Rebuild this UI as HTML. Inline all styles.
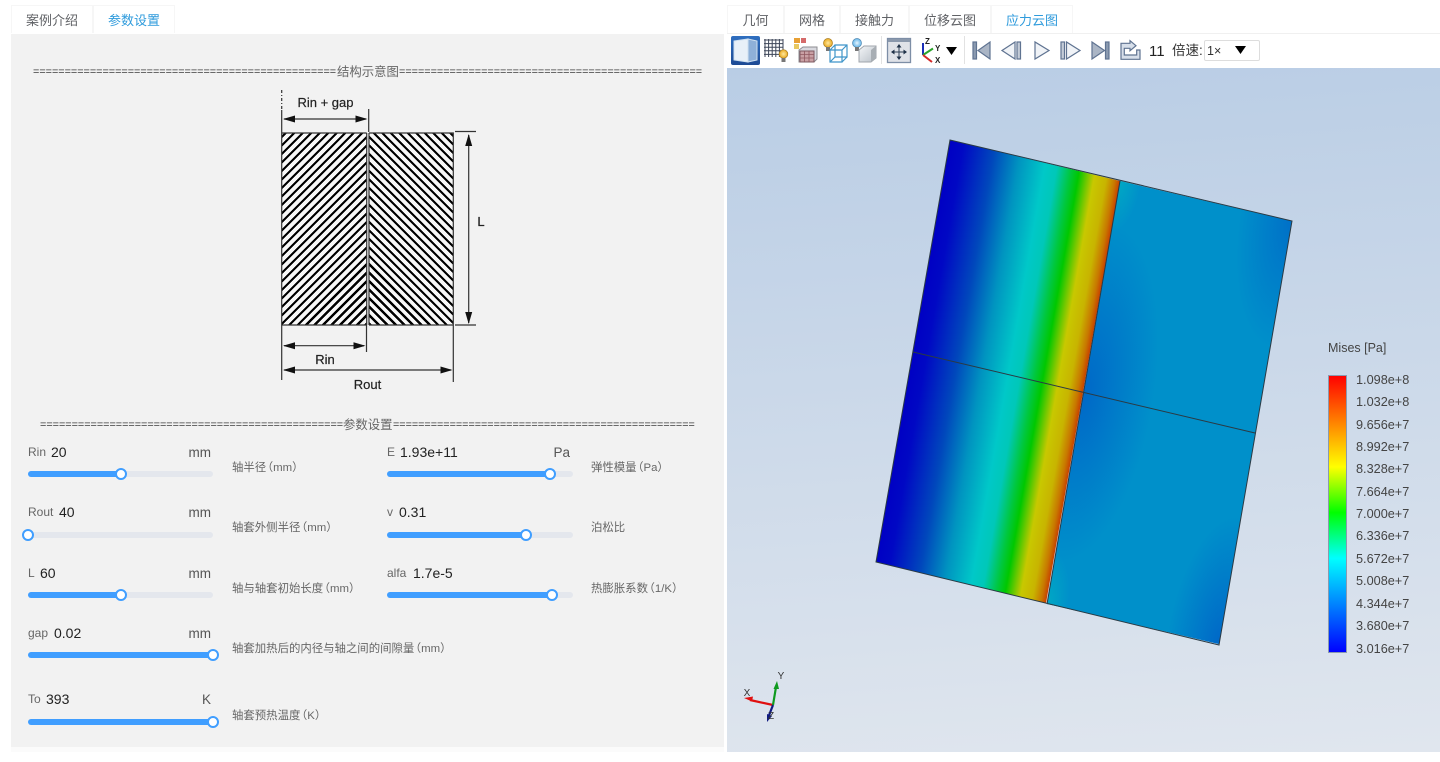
<!DOCTYPE html>
<html><head><meta charset="utf-8">
<style>
html,body{margin:0;padding:0;background:#fff;width:1440px;height:762px;overflow:hidden}
body{position:relative;font-family:"Liberation Sans","Noto Sans CJK SC",sans-serif;color:#606266}
.a{position:absolute;white-space:nowrap;line-height:1}
.tab{position:absolute;top:5px;height:28px;border:1px solid #f6f6f6;border-bottom:0;box-sizing:border-box;font-size:13px;line-height:29px;text-align:center;color:#606266;background:#fff}
.on{color:#2f9bdc}
.eq{font-size:10.82px;color:#3c3c3c}
.ttl{font-size:12.4px;color:#666}
.tr{position:absolute;height:6px;border-radius:3px;background:#e4e7ed}
.fl{position:absolute;height:6px;border-radius:3px;background:#409eff}
.th{position:absolute;width:12px;height:12px;box-sizing:border-box;border-radius:50%;background:#fff;border:2px solid #409eff}
.lb{font-size:12px;color:#666}
.val{font-size:14px;color:#222}
.un{font-size:13.5px;color:#555}
.ds{font-size:11.4px;color:#666;top:0}
.ds i{font-style:normal;margin-left:-4.5px}
.lg{font-size:12.7px;color:#444;left:1356px}
</style></head><body>

<div class="a" style="left:11px;top:34px;width:713px;height:713px;background:#f2f2f2"></div>
<div class="a" style="left:11px;top:747px;width:713px;height:5px;background:#fbfbfb"></div>

<div class="tab" style="left:11px;width:82px">案例介绍</div>
<div class="tab on" style="left:93px;width:82px;color:#2f9bdc">参数设置</div>

<div class="a eq" style="left:33px;top:67px">================================================</div>
<div class="a ttl" style="left:337px;top:66px">结构示意图</div>
<div class="a eq" style="left:399px;top:67px">================================================</div>

<div class="a" style="left:282px;top:133px;width:85px;height:192px;background:repeating-linear-gradient(-45deg,#000 0 2.2px,#f8f8f8 2.2px 6px)"></div>
<div class="a" style="left:369px;top:133px;width:84px;height:192px;background:repeating-linear-gradient(45deg,#000 0 2.2px,#f8f8f8 2.2px 6px)"></div>
<svg class="a" style="left:250px;top:80px" width="260" height="320" viewBox="250 80 260 320">
<g fill="none" stroke="#333" stroke-width="1.2">
<path d="M281.700 90V110" stroke-dasharray="3 2 1 2"/>
<path d="M281.700 110V380M282 133H366.700M282 325H366.500V352M369 133H453.300V382M369 325H453M369 133V325M366.700 133V325M368.700 109V132M455 131.500H476M455 325H476"/>
<path d="M284 119H366M284 345.700H364M284 370H451M468.700 135V323"/>
</g>
<g fill="#111">
<path d="M283 119l12-3.500v7zM367.500 119l-12-3.500v7zM283 345.700l12-3.500v7zM365.500 345.700l-12-3.500v7zM283 370l12-3.500v7zM452.500 370l-12-3.500v7zM468.700 134l-3.500 12h7zM468.700 324l-3.500-12h7z"/>
</g>
<g font-family="Liberation Sans,sans-serif" font-size="13" fill="#222" stroke="#222" stroke-width=".2" text-anchor="middle">
<text x="325.500" y="107">Rin + gap</text>
<text x="325" y="364">Rin</text>
<text x="367.500" y="389">Rout</text>
<text x="481" y="226">L</text>
</g>
</svg>

<div class="a eq" style="left:40px;top:420px">================================================</div>
<div class="a ttl" style="left:343px;top:419px">参数设置</div>
<div class="a eq" style="left:393px;top:420px;font-size:10.78px">================================================</div>

<!-- sliders left -->
<div class="a lb" style="left:28px;top:446px">Rin</div><div class="a val" style="left:51px;top:445px">20</div><div class="a un" style="right:1229px;top:446px">mm</div>
<div class="tr" style="left:28px;top:471px;width:185px"></div><div class="fl" style="left:28px;top:471px;width:93px"></div><div class="th" style="left:115px;top:468px"></div>
<div class="a ds" style="left:232px;top:463px">轴半径<i>（</i>mm）</div>

<div class="a lb" style="left:28px;top:506px">Rout</div><div class="a val" style="left:59px;top:505px">40</div><div class="a un" style="right:1229px;top:506px">mm</div>
<div class="tr" style="left:28px;top:532px;width:185px"></div><div class="th" style="left:22px;top:529px"></div>
<div class="a ds" style="left:232px;top:523px">轴套外侧半径<i>（</i>mm）</div>

<div class="a lb" style="left:28px;top:567px">L</div><div class="a val" style="left:40px;top:566px">60</div><div class="a un" style="right:1229px;top:567px">mm</div>
<div class="tr" style="left:28px;top:592px;width:185px"></div><div class="fl" style="left:28px;top:592px;width:93px"></div><div class="th" style="left:115px;top:589px"></div>
<div class="a ds" style="left:232px;top:584px">轴与轴套初始长度<i>（</i>mm）</div>

<div class="a lb" style="left:28px;top:627px">gap</div><div class="a val" style="left:54px;top:626px">0.02</div><div class="a un" style="right:1229px;top:627px">mm</div>
<div class="fl" style="left:28px;top:652px;width:185px"></div><div class="th" style="left:207px;top:649px"></div>
<div class="a ds" style="left:232px;top:644px">轴套加热后的内径与轴之间的间隙量<i>（</i>mm）</div>

<div class="a lb" style="left:28px;top:693px">To</div><div class="a val" style="left:46px;top:692px">393</div><div class="a un" style="right:1229px;top:693px">K</div>
<div class="fl" style="left:28px;top:719px;width:185px"></div><div class="th" style="left:207px;top:716px"></div>
<div class="a ds" style="left:232px;top:711px">轴套预热温度<i>（</i>K）</div>

<!-- sliders right -->
<div class="a lb" style="left:387px;top:446px">E</div><div class="a val" style="left:400px;top:445px">1.93e+11</div><div class="a un" style="right:870px;top:446px">Pa</div>
<div class="tr" style="left:387px;top:471px;width:186px"></div><div class="fl" style="left:387px;top:471px;width:163px"></div><div class="th" style="left:544px;top:468px"></div>
<div class="a ds" style="left:591px;top:463px">弹性模量<i>（</i>Pa）</div>

<div class="a lb" style="left:387px;top:506px">v</div><div class="a val" style="left:399px;top:505px">0.31</div>
<div class="tr" style="left:387px;top:532px;width:186px"></div><div class="fl" style="left:387px;top:532px;width:139px"></div><div class="th" style="left:520px;top:529px"></div>
<div class="a ds" style="left:591px;top:523px">泊松比</div>

<div class="a lb" style="left:387px;top:567px">alfa</div><div class="a val" style="left:413px;top:566px">1.7e-5</div>
<div class="tr" style="left:387px;top:592px;width:186px"></div><div class="fl" style="left:387px;top:592px;width:165px"></div><div class="th" style="left:546px;top:589px"></div>
<div class="a ds" style="left:591px;top:584px">热膨胀系数<i>（</i>1/K）</div>

<!-- right tabs -->
<div class="tab" style="left:727px;width:57px">几何</div>
<div class="tab" style="left:784px;width:56px">网格</div>
<div class="tab" style="left:840px;width:69px">接触力</div>
<div class="tab" style="left:909px;width:82px">位移云图</div>
<div class="tab on" style="left:991px;width:82px;color:#2f9bdc">应力云图</div>
<div class="a" style="left:727px;top:33px;width:713px;height:1px;background:#f0f0f0"></div>

<!-- toolbar -->
<svg class="a" style="left:727px;top:34px" width="713" height="34" viewBox="727 34 713 34">
<defs>
<linearGradient id="sel" x1="0" y1="0" x2="0" y2="1"><stop offset="0" stop-color="#2f6fc0"/><stop offset="1" stop-color="#1d4a94"/></linearGradient>
<linearGradient id="cb" x1="0" y1="0" x2="1" y2="1"><stop offset="0" stop-color="#f4f6f8"/><stop offset="1" stop-color="#b9c0c8"/></linearGradient>
<radialGradient id="bulb"><stop offset="0" stop-color="#ffe9a0"/><stop offset="1" stop-color="#e9a81e"/></radialGradient>
<radialGradient id="bulb2"><stop offset="0" stop-color="#e8f6ff"/><stop offset="1" stop-color="#62b4e8"/></radialGradient>
</defs>
<!-- solid selected -->
<rect x="731" y="36" width="29" height="29" rx="2" fill="url(#sel)"/>
<path d="M734 41L748 39V62L734 60z" fill="#e8f0f8" stroke="#cfe0f0"/>
<path d="M748 39L757 41V60L748 62z" fill="#8eb0d8" stroke="#cfe0f0"/>
<!-- grid + bulb -->
<path d="M765 39V57M768.600 39V57M772.200 39V57M775.800 39V57M779.400 39V57M783 39V50M764 40H783M764 43.600H783M764 47.200H783M764 50.800H781M764 54.400H780" stroke="#3d4658" stroke-width="1" fill="none"/>
<circle cx="783.500" cy="54" r="4.300" fill="url(#bulb)" stroke="#a87c20" stroke-width=".7"/><rect x="781.500" y="58" width="4" height="4" fill="#777"/>
<!-- mesh cube -->
<rect x="794" y="38" width="6" height="5" fill="#e8a035"/><rect x="801" y="38" width="5" height="5" fill="#d56a6a"/><rect x="794" y="44" width="5" height="5" fill="#e8c860"/>
<path d="M799 50L803 47H817V59L814 62H799z" fill="#d8d8de" stroke="#8d8d92"/>
<path d="M800 51H814V62H800z" fill="#c9a0a4" stroke="#7d5860"/>
<path d="M804.500 51V62M809 51V62M800 54.500H814M800 58H814" stroke="#8f5860" stroke-width=".8"/>
<!-- wire cube -->
<circle cx="828" cy="43" r="4.500" fill="url(#bulb)" stroke="#a87c20" stroke-width=".7"/><rect x="826" y="47" width="4" height="4" fill="#777"/>
<path d="M830 50H842V62H830zM835 45H847V57H835zM830 50L835 45M842 50L847 45M842 62L847 57M830 62L835 57" fill="none" stroke="#3f95c9" stroke-width="1.200"/>
<!-- solid cube bulb -->
<circle cx="857" cy="43" r="4.500" fill="url(#bulb2)" stroke="#4f86b0" stroke-width=".7"/><rect x="855" y="47" width="4" height="4" fill="#777"/>
<path d="M859 50L864 46H876V58L871 62H859z" fill="url(#cb)" stroke="#a0a6ac"/><path d="M871 50L876 46V58L871 62z" fill="#a8aeb4"/>
<path d="M881.500 36V64" stroke="#e2e2e2"/>
<!-- fit -->
<rect x="887.500" y="38.500" width="23" height="24" fill="#dfe2e8" stroke="#7d8ea6" stroke-width="1.300"/><rect x="888" y="39" width="22" height="3" fill="#8a98ac"/>
<path d="M899 46v12M893 52h12" stroke="#2e3f55" stroke-width="1"/><path d="M899 44l-2.500 3.500h5zM899 60l-2.500-3.500h5zM891 52l3.500-2.500v5zM907 52l-3.500-2.500v5z" fill="#1f3148"/>
<!-- axes -->
<path d="M923 55V43" stroke="#1c2fb8" stroke-width="2"/><path d="M923 55L933 48.500" stroke="#2ca52c" stroke-width="2"/><path d="M923 55L932 62" stroke="#d42a2a" stroke-width="2"/>
<g font-family="Liberation Sans,sans-serif" font-size="8" font-weight="bold" fill="#222"><text x="925" y="44">Z</text><text x="935" y="51">Y</text><text x="935" y="63">X</text></g>
<path d="M946 47h11l-5.500 8z" fill="#000"/>
<path d="M964.500 36V64" stroke="#e2e2e2"/>
<!-- media -->
<g stroke="#5f7391" stroke-width="1.200">
<rect x="973" y="42" width="3.500" height="17" fill="#8b9ab0"/><path d="M990 42V59L978 50.500z" fill="#aab5c5"/>
<path d="M1015 42V59L1002 50.500z" fill="#f0f3f7"/><rect x="1017" y="42" width="3.500" height="17" fill="#c4ccd8"/>
<path d="M1035 42V59L1049 50.500z" fill="#f0f3f7"/>
<rect x="1061" y="42" width="3.500" height="17" fill="#c4ccd8"/><path d="M1066.500 42V59L1080 50.500z" fill="#f0f3f7"/>
<path d="M1092 42V59L1104.500 50.500z" fill="#aab5c5"/><rect x="1105.500" y="42" width="3.500" height="17" fill="#8b9ab0"/>
<path d="M1121 43.300H1130V40.700L1136 45.700 1130 50.700V48.300H1124.300V55H1136.700V50H1140V59.300H1121z" fill="#d7dfea"/>
</g>
</svg>
<div class="a" style="left:1149px;top:44px;font-size:15px;color:#222">11</div>
<div class="a" style="left:1172px;top:44px;font-size:13.500px;color:#333">倍速:</div>
<div class="a" style="left:1204px;top:40px;width:56px;height:21px;box-sizing:border-box;background:#fff;border:1px solid #ddd;border-radius:2px"></div>
<div class="a" style="left:1207px;top:45px;font-size:12.500px;color:#333">1×</div>
<svg class="a" style="left:1235px;top:46px" width="11" height="9"><path d="M0 0h11l-5.500 8z" fill="#000"/></svg>

<!-- viewport -->
<div class="a" style="left:727px;top:68px;width:713px;height:684px;background:linear-gradient(176deg,#b9cde5 0%,#e0e6ee 100%)"></div>

<svg class="a" style="left:727px;top:68px" width="713" height="684" viewBox="727 68 713 684">
<defs>
<linearGradient id="lf" gradientUnits="userSpaceOnUse" x1="0" y1="0" x2="1" y2="0">
<stop offset="0" stop-color="#0000c4"/><stop offset=".08" stop-color="#0008c4"/><stop offset=".26" stop-color="#0048bc"/><stop offset=".41" stop-color="#0094c0"/><stop offset=".56" stop-color="#00c8c8"/><stop offset=".63" stop-color="#00c8b8"/><stop offset=".71" stop-color="#00c840"/><stop offset=".76" stop-color="#00c800"/><stop offset=".81" stop-color="#70c800"/><stop offset=".85" stop-color="#c8c800"/><stop offset=".92" stop-color="#c8b400"/><stop offset=".97" stop-color="#c87800"/><stop offset="1" stop-color="#c84000"/>
</linearGradient>
<radialGradient id="c1" gradientUnits="userSpaceOnUse" cx="0" cy=".5" r=".4"><stop offset="0" stop-color="#0068c8"/><stop offset="1" stop-color="#0068c8" stop-opacity="0"/></radialGradient>
<radialGradient id="c2" gradientUnits="userSpaceOnUse" cx="1" cy="0" r=".3"><stop offset="0" stop-color="#0070c8"/><stop offset="1" stop-color="#0070c8" stop-opacity="0"/></radialGradient>
<radialGradient id="c3" gradientUnits="userSpaceOnUse" cx="1" cy="1" r=".3"><stop offset="0" stop-color="#0068c8"/><stop offset="1" stop-color="#0068c8" stop-opacity="0"/></radialGradient>
<radialGradient id="c4" gradientUnits="userSpaceOnUse" cx="0" cy="0" r=".12"><stop offset="0" stop-color="#00a8c4"/><stop offset="1" stop-color="#00a8c4" stop-opacity="0"/></radialGradient>
<radialGradient id="c5" gradientUnits="userSpaceOnUse" cx="0" cy="1" r=".12"><stop offset="0" stop-color="#00a8c4"/><stop offset="1" stop-color="#00a8c4" stop-opacity="0"/></radialGradient>
<linearGradient id="leg" x1="0" y1="0" x2="0" y2="1">
<stop offset="0" stop-color="#f00"/><stop offset=".33" stop-color="#ff0"/><stop offset=".495" stop-color="#0f0"/><stop offset=".66" stop-color="#0ff"/><stop offset="1" stop-color="#00f"/>
</linearGradient>
</defs>
<g transform="matrix(170 41 -74 422 950 140)"><rect width="1" height="1" fill="url(#lf)"/></g>
<g transform="matrix(172 40 -73 423 1120 181)">
<rect width="1" height="1" fill="#0090ca"/>
<rect width="1" height="1" fill="url(#c1)"/><rect width="1" height="1" fill="url(#c2)"/><rect width="1" height="1" fill="url(#c3)"/><rect width="1" height="1" fill="url(#c4)"/><rect width="1" height="1" fill="url(#c5)"/>
</g>
<path d="M950 140L1292 221 1219 645 876 562zM1120 181L1047 604M913 352L1255 433" fill="none" stroke="#2a3a44" stroke-width="1"/>
<rect x="1328.500" y="375.500" width="18" height="277" fill="url(#leg)" stroke="#8a9ab0"/>
<!-- triad -->
<path d="M773 705L750 700" stroke="#e01010" stroke-width="2.200"/><path d="M744 698l9-1.500-1 5z" fill="#e01010"/>
<path d="M773 705L776 687" stroke="#0f9a1f" stroke-width="2.200"/><path d="M777 681l-3.500 8h5.500z" fill="#0f9a1f"/>
<path d="M773 705L768 718" stroke="#101a80" stroke-width="2.200"/><path d="M767 722l0-8 5 2z" fill="#101a80"/>
<g font-family="Liberation Sans,sans-serif" font-size="10" fill="#333" text-anchor="middle"><text x="747" y="696">X</text><text x="781" y="679">Y</text><text x="771" y="719">Z</text></g>
</svg>

<div class="a" style="left:1328px;top:342px;font-size:12.500px;color:#444">Mises [Pa]</div>
<div class="a lg" style="top:374px">1.098e+8</div>
<div class="a lg" style="top:396px">1.032e+8</div>
<div class="a lg" style="top:419px">9.656e+7</div>
<div class="a lg" style="top:441px">8.992e+7</div>
<div class="a lg" style="top:463px">8.328e+7</div>
<div class="a lg" style="top:486px">7.664e+7</div>
<div class="a lg" style="top:508px">7.000e+7</div>
<div class="a lg" style="top:530px">6.336e+7</div>
<div class="a lg" style="top:553px">5.672e+7</div>
<div class="a lg" style="top:575px">5.008e+7</div>
<div class="a lg" style="top:598px">4.344e+7</div>
<div class="a lg" style="top:620px">3.680e+7</div>
<div class="a lg" style="top:643px">3.016e+7</div>

</body></html>
